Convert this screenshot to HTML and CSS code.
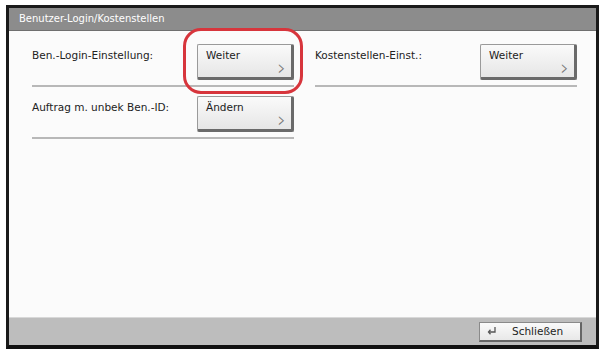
FILE: index.html
```html
<!DOCTYPE html>
<html>
<head>
<meta charset="utf-8">
<link rel="stylesheet" href="styles.css">
</head>
<body>
<div class="screen">
  <div class="titlebar">Benutzer-Login/Kostenstellen</div>
  <div class="content">
    <div class="grid">
      <div class="row">
        <span class="label">Ben.-Login-Einstellung:</span>
        <button class="btn highlighted">Weiter<span class="chev">&#x203A;</span></button>
      </div>
      <div class="row">
        <span class="label">Kostenstellen-Einst.:</span>
        <button class="btn">Weiter<span class="chev">&#x203A;</span></button>
      </div>
      <div class="row">
        <span class="label">Auftrag m. unbek Ben.-ID:</span>
        <button class="btn">Ändern<span class="chev">&#x203A;</span></button>
      </div>
    </div>
  </div>
  <div class="footer">
    <button class="close">
      <svg class="enter" width="12" height="10" viewBox="0 0 12 10"><path d="M9 1 V6 H3" fill="none" stroke="#555" stroke-width="1.3"/><path d="M4.5 3.8 L2.5 6 L4.5 8.2" fill="none" stroke="#555" stroke-width="1.3"/></svg>
      <span>Schließen</span>
    </button>
  </div>
</div>
</body>
</html>
```

FILE: styles.css
```css
html, body {
  margin: 0;
  padding: 0;
  background: #ffffff;
}
body {
  font-family: "DejaVu Sans", "Liberation Sans", sans-serif;
  width: 601px;
  height: 351px;
  overflow: hidden;
}
.screen {
  margin: 5px 4px 0 6px;
  width: 587px;
  height: 337px;
  border-left: 3px solid #1a1a1a;
  border-right: 3px solid #1a1a1a;
  border-top: 3px solid #1a1a1a;
  border-bottom: 4px solid #111;
  display: flex;
  flex-direction: column;
  background: #f8f8f8;
}
.titlebar {
  height: 22px;
  background: #8c8c8c;
  color: #ffffff;
  font-size: 10px;
  line-height: 22px;
  padding-left: 10px;
  border-bottom: 1px solid #6f6f6f;
}
.content {
  flex: 1;
  padding: 13px 16px 0 23px;
  background: #fbfbfb;
}
.grid {
  display: grid;
  grid-template-columns: 262px 262px;
  column-gap: 21px;
  row-gap: 9px;
}
.row {
  display: flex;
  justify-content: space-between;
  align-items: flex-start;
  padding-bottom: 4px;
  border-bottom: 2px solid #b8b8b8;
  height: 37px;
  position: relative;
}
.label {
  font-size: 10.5px;
  color: #222;
  padding-top: 5px;
}
.btn {
  width: 97px;
  height: 36px;
  background: linear-gradient(#fafafa, #e6e6e6);
  border: 1px solid #9a9a9a;
  border-right: 3px solid #6a6a6a;
  border-bottom: 3px solid #6a6a6a;
  border-radius: 2px;
  font-family: inherit;
  font-size: 10.5px;
  color: #222;
  text-align: left;
  padding: 4px 8px;
  position: relative;
  display: flex;
  align-items: flex-start;
}
.chev {
  position: absolute;
  right: 5px;
  bottom: -2px;
  font-size: 22px;
  color: #777;
  line-height: 22px;
  font-weight: 300;
}
.highlighted::after {
  content: "";
  position: absolute;
  left: -15px;
  top: -17px;
  width: 114px;
  height: 60px;
  border: 3px solid #d7353c;
  border-radius: 18px;
}
.footer {
  height: 27px;
  background: #bdbdbd;
  border-top: 1px solid #d8d8d8;
  display: flex;
  justify-content: flex-end;
  align-items: center;
  padding-right: 14px;
}
.close {
  width: 103px;
  height: 20px;
  background: linear-gradient(#fafafa, #e8e8e8);
  border: 1px solid #8a8a8a;
  border-right: 2px solid #666;
  border-bottom: 2px solid #666;
  font-family: inherit;
  font-size: 10.5px;
  color: #222;
  display: flex;
  align-items: center;
  padding: 0 6px;
  gap: 14px;
}
```
